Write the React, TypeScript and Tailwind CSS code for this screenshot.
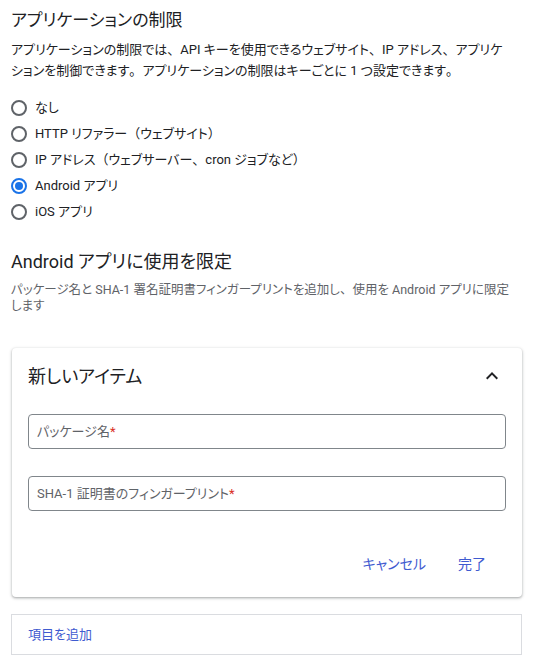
import React from "react";

type Option = {
  label: string;
  checked?: boolean;
};

const options: Option[] = [
  { label: "なし" },
  { label: "HTTP リファラー（ウェブサイト）" },
  { label: "IP アドレス（ウェブサーバー、cron ジョブなど）" },
  { label: "Android アプリ", checked: true },
  { label: "iOS アプリ" },
];

// kana stay proportional, punctuation keeps its full width
const Jp = ({ text }: { text: string }) => (
  <>
    {text.split(/([、。（）])/).map((part, i) =>
      /^[、。（）]$/.test(part) ? (
        <span key={i} className="[font-feature-settings:normal]">
          {part}
        </span>
      ) : (
        part
      )
    )}
  </>
);

const Radio = ({ checked }: { checked?: boolean }) => (
  <span
    className={`flex h-4 w-4 items-center justify-center rounded-full border-2 ${
      checked ? "border-[#1a73e8]" : "border-[#5f6368]"
    }`}
  >
    {checked && <span className="h-2 w-2 rounded-full bg-[#1a73e8]" />}
  </span>
);

const App = () => {
  return (
    <div className="min-h-[666px] w-[542px] bg-white pl-[11px] pr-[20px] text-[#202124] [font-family:Roboto,'Noto_Sans_CJK_JP',sans-serif] [font-feature-settings:'palt']">
      <h2 className="pt-2 text-[17px] leading-6">アプリケーションの制限</h2>
      <p className="mt-[7px] whitespace-nowrap text-[13px] leading-[21px]">
        <Jp text="アプリケーションの制限では、API キーを使用できるウェブサイト、IP アドレス、アプリケ" />
        <br />
        <Jp text="ションを制御できます。アプリケーションの制限はキーごとに 1 つ設定できます。" />
      </p>

      <div className="mt-[14px] flex flex-col">
        {options.map((option, idx) => (
          <label key={idx} className="flex h-[26px] items-center gap-2">
            <Radio checked={option.checked} />
            <span className="text-[13px]">
              <Jp text={option.label} />
            </span>
          </label>
        ))}
      </div>

      <h2 className="mt-[25px] text-[18px] leading-6">Android アプリに使用を限定</h2>
      <p className="mt-2 whitespace-nowrap text-[12.5px] leading-4 text-[#5f6368]">
        <Jp text="パッケージ名と SHA-1 署名証明書フィンガープリントを追加し、使用を Android アプリに限定" />
        <br />
        します
      </p>

      <div className="ml-px mt-[34px] rounded-[4px] bg-white px-4 pb-[15px] pt-4 shadow-[0_1px_2px_rgba(60,64,67,0.3),0_1px_3px_1px_rgba(60,64,67,0.15)]">
        <div className="flex h-6 items-center justify-between">
          <span className="text-[18px]">新しいアイテム</span>
          <svg width="24" height="24" viewBox="0 0 24 24" className="mr-[2px]">
            <path d="M7.41 15.41 12 10.83l4.59 4.58L18 14l-6-6-6 6z" fill="#202124" />
          </svg>
        </div>

        <div className="mt-[26px] flex h-[35px] items-center rounded-[4px] border border-[#80868b] px-2 text-[13px] text-[#5f6368]">
          パッケージ名<span className="text-[#d93025]">*</span>
        </div>
        <div className="mt-[27px] flex h-[35px] items-center rounded-[4px] border border-[#80868b] px-2 text-[13px] text-[#5f6368]">
          SHA-1 証明書のフィンガープリント<span className="text-[#d93025]">*</span>
        </div>

        <div className="mt-[35px] flex h-9 items-center justify-end pr-[4px] text-[14px] text-[#3f5bd0]">
          <button className="h-9 px-4">キャンセル</button>
          <button className="h-9 px-4">完了</button>
        </div>
      </div>

      <div className="mt-[17px] flex h-[41px] items-center border border-[#dadce0] px-4 text-[13px] text-[#3f5bd0]">
        項目を追加
      </div>
    </div>
  );
};

export default App;
